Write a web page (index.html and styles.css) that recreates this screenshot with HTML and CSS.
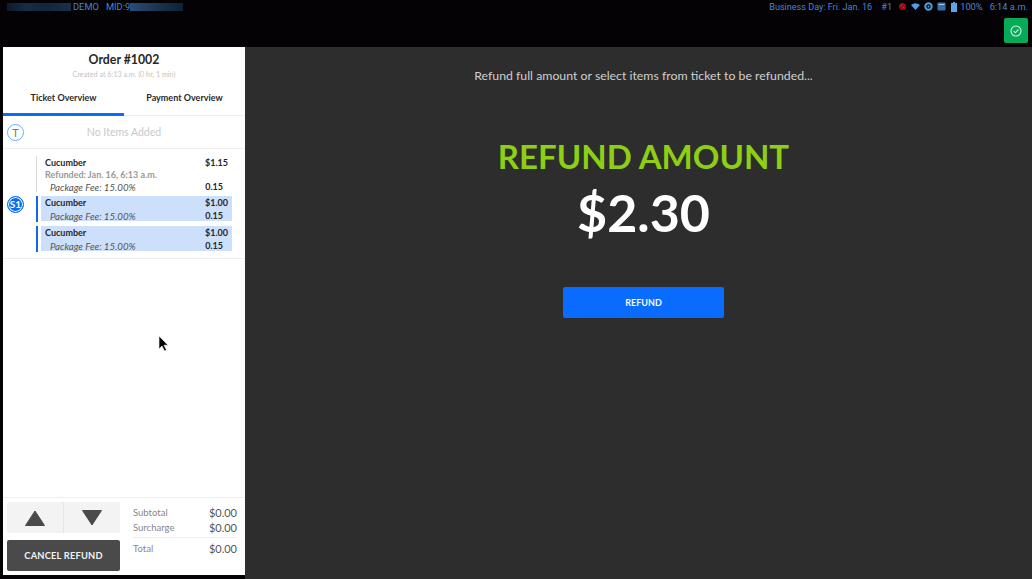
FILE: index.html
```html
<!DOCTYPE html>
<html lang="en">
<head>
<meta charset="utf-8">
<title>Refund</title>
<link rel="stylesheet" href="styles.css">
</head>
<body>
<div class="app">
  <header class="topbar">
    <div class="status">
      <div class="status-left">
        <span class="redact redact-a"></span>
        <span class="demo">DEMO</span>
        <span class="mid">MID:9</span>
        <span class="redact redact-b"></span>
      </div>
      <div class="status-right">
        <span class="biz">Business Day: Fri. Jan. 16</span>
        <span class="num">#1</span>
        <svg class="ico" width="9" height="9" viewBox="0 0 9 9"><path d="M3 1h3l2 2v3L6 8H3L1 6V3z" fill="#8f0c14"/><circle cx="3.500" cy="3.500" r="1" fill="#d01820"/><circle cx="5.500" cy="5.500" r="1" fill="#d01820"/></svg>
        <svg class="ico" width="9" height="7" viewBox="0 0 9 7"><path d="M0 2Q4.500-1.500 9 2L4.500 7z" fill="#4d9de8"/></svg>
        <svg class="ico" width="9" height="9" viewBox="0 0 9 9"><circle cx="4.500" cy="4.500" r="3.200" fill="none" stroke="#4d9de8" stroke-width="2"/><circle cx="4.500" cy="4.500" r="1" fill="#4d9de8"/></svg>
        <svg class="ico" width="9" height="9" viewBox="0 0 9 9"><rect x=".5" y=".5" width="8" height="8" rx="1" fill="#3a6ea8"/><rect x="1.500" y="2" width="6" height="1" fill="#a5c8ee"/></svg>
        <svg class="ico batt" width="6" height="10" viewBox="0 0 6 10"><path d="M2 0h2v1h2v9H0V1h2z" fill="#5aa6ee"/></svg>
        <span class="pct">100%</span>
        <span class="clock">6:14 a.m.</span>
      </div>
    </div>
    <div class="actions">
      <button class="ok-btn" aria-label="OK">
        <svg width="12" height="12" viewBox="0 0 12 12"><circle cx="6" cy="6" r="5" fill="none" stroke="#d8f3e2" stroke-width="1.100"/><path d="M3.600 6.200 5.300 7.800 8.400 4.500" fill="none" stroke="#d8f3e2" stroke-width="1.100"/></svg>
      </button>
    </div>
  </header>
  <div class="content">
    <aside class="sidebar">
      <div class="order-head">
        <h1 class="order-title">Order #1002</h1>
        <p class="order-sub">Created at 6:13 a.m. (0 hr, 1 min)</p>
      </div>
      <nav class="tabs">
        <div class="tab tab-active">Ticket Overview</div>
        <div class="tab">Payment Overview</div>
      </nav>
      <section class="seat-empty">
        <span class="badge badge-t">T</span>
        <span class="no-items">No Items Added</span>
      </section>
      <section class="seat">
        <span class="badge badge-s">S1</span>
        <div class="items">
          <div class="item item-refunded">
            <div class="row"><span class="name">Cucumber</span><span class="price">$1.15</span></div>
            <div class="refunded">Refunded: Jan. 16, 6:13 a.m.</div>
            <div class="row fee"><span>Package Fee: 15.00%</span><span class="fee-price">0.15</span></div>
          </div>
          <div class="item item-selected">
            <div class="item-body">
              <div class="row"><span class="name">Cucumber</span><span class="price">$1.00</span></div>
              <div class="row fee"><span>Package Fee: 15.00%</span><span class="fee-price">0.15</span></div>
            </div>
          </div>
          <div class="item item-selected">
            <div class="item-body">
              <div class="row"><span class="name">Cucumber</span><span class="price">$1.00</span></div>
              <div class="row fee"><span>Package Fee: 15.00%</span><span class="fee-price">0.15</span></div>
            </div>
          </div>
        </div>
      </section>
      <div class="spacer"></div>
      <footer class="side-foot">
        <div class="controls">
          <div class="arrows">
            <button class="arrow" aria-label="Up"><svg width="20" height="16" viewBox="0 0 20 16"><path d="M10 1 19.500 15.500H.5z" fill="#4a4a4a" stroke="#4a4a4a" stroke-linejoin="round"/></svg></button>
            <button class="arrow" aria-label="Down"><svg width="20" height="16" viewBox="0 0 20 16"><path d="M10 15 .5.500h19z" fill="#4a4a4a" stroke="#4a4a4a" stroke-linejoin="round"/></svg></button>
          </div>
          <button class="cancel">CANCEL REFUND</button>
        </div>
        <div class="totals">
          <div class="t-row"><span class="t-label">Subtotal</span><span class="t-val">$0.00</span></div>
          <div class="t-row"><span class="t-label">Surcharge</span><span class="t-val">$0.00</span></div>
          <div class="t-row t-total"><span class="t-label">Total</span><span class="t-val">$0.00</span></div>
        </div>
      </footer>
    </aside>
    <main class="main">
      <p class="hint">Refund full amount or select items from ticket to be refunded...</p>
      <h2 class="refund-title">REFUND AMOUNT</h2>
      <div class="refund-value">$2.30</div>
      <button class="refund-btn">REFUND</button>
    </main>
  </div>
</div>
<svg class="cursor" width="12" height="18" viewBox="0 0 12 18"><path d="M1 1v13l3-3 2.500 5 2-1-2.500-4.800H10z" fill="#000" stroke="#fff" stroke-width=".6"/></svg>
</body>
</html>
```
FILE: styles.css
```css
* { box-sizing: border-box; }
html, body { margin: 0; height: 100%; overflow: hidden; }
body { background: #040204; font-family: "Lato", "Open Sans", sans-serif; color: #222; }
p, h1, h2 { margin: 0; }
button { border: 0; padding: 0; font: inherit; cursor: pointer; }

.app { display: flex; flex-direction: column; height: 579px; width: 1032px; }

.topbar { height: 47px; flex: none; display: flex; flex-direction: column; background: #040204; }
.status { height: 13px; display: flex; justify-content: space-between; align-items: center; font-family: "Roboto", sans-serif; font-size: 9.300px; color: #4588d0; padding: 0 4px 0 7px; white-space: nowrap; }
.status-left, .status-right { display: flex; align-items: center; }
.redact { display: block; height: 8px; }
.redact-a { width: 64px; background: linear-gradient(90deg, #0c1a2a, #182c44 30%, #10263c 60%, #1a3048); margin-right: 2px; }
.redact-b { width: 53px; background: linear-gradient(90deg, #2a4e78, #1a3550 50%, #0f2234); }
.demo { margin-right: 7px; }
.biz { margin-right: 9px; font-size: 9.050px; }
.num { margin-right: 6px; }
.ico { margin-right: 4px; flex: none; }
.batt { margin: 0 3px 0 1px; }
.pct { margin-right: 7px; }
.actions { display: flex; justify-content: flex-end; padding: 5px 4px 0 0; }
.ok-btn { width: 24px; height: 25px; background: #06ab58; border-radius: 2px; display: flex; align-items: center; justify-content: center; }

.content { flex: 1; display: flex; min-height: 0; padding-left: 3px; background: #040204; }
.sidebar { width: 242px; margin-bottom: 4px; background: #fff; display: flex; flex-direction: column; }
.main { flex: 1; background: #2d2d2d; display: flex; flex-direction: column; align-items: center; padding-left: 10px; }

.order-head { height: 42px; text-align: center; padding-top: 5px; }
.order-title { font-size: 12.300px; font-weight: 700; line-height: 15px; color: #262626; }
.order-sub { font-size: 7.200px; line-height: 9px; margin-top: 3px; color: #c4c4c4; }

.tabs { display: flex; height: 27px; border-bottom: 1px solid #eee; }
.tab { width: 121px; font-size: 9px; font-weight: 700; color: #2a2a2a; text-align: center; padding-top: 3px; height: 27px; }
.tab-active { border-bottom: 3px solid #0a6cf0; }

.seat-empty { display: flex; align-items: center; height: 33px; border-bottom: 1px solid #eee; padding-left: 4px; }
.badge { width: 17px; height: 17px; border-radius: 50%; display: flex; align-items: center; justify-content: center; flex: none; font-size: 10px; }
.badge-t { border: 1px solid #6aaef5; color: #777; font-size: 11px; }
.no-items { flex: 1; text-align: center; color: #c8c8c8; font-size: 10.500px; padding-right: 21px; }

.seat { display: flex; align-items: center; padding: 7px 0 6px 4px; border-bottom: 1px solid #eee; }
.badge-s { background: #0a6cf0; border: 1px solid #0a6cf0; box-shadow: inset 0 0 0 1px #fff; color: #fff; font-weight: 700; }
.items { margin-left: 12px; width: 196px; display: flex; flex-direction: column; gap: 4px; }
.item { font-size: 9px; line-height: 12px; }
.item-refunded { border-left: 1px solid #d8d8d8; padding: 1px 4px 1px 8px; height: 36px; }
.item-selected { border-left: 2px solid #0a6cf0; padding-left: 3px; height: 26px; }
.item-body { background: #cce0fb; height: 25px; padding: 1px 4px 0 4px; }
.row { display: flex; justify-content: space-between; }
.item-selected .fee { margin-top: 1px; }
.name { font-weight: 700; color: #262626; }
.price { font-weight: 700; color: #262626; }
.refunded { color: #999; font-weight: 700; line-height: 12px; }
.fee { font-style: italic; color: #555; padding-left: 5px; font-size: 9.700px; }
.fee-price { font-style: normal; font-weight: 700; font-size: 9px; color: #262626; padding-right: 5px; }

.spacer { flex: 1; }
.side-foot { display: flex; border-top: 1px solid #eee; height: 78px; padding: 4px 8px 0 4px; }
.controls { width: 113px; display: flex; flex-direction: column; gap: 7px; }
.arrows { display: flex; height: 31px; background: #f3f3f3; border-radius: 2px; }
.arrow { flex: 1; background: transparent; display: flex; align-items: center; justify-content: center; }
.arrow + .arrow { border-left: 1px solid #e6e6e6; }
.cancel { height: 31px; background: #4a4a4a; border-radius: 2px; color: #f2f2f2; font-size: 9.300px; font-weight: 700; letter-spacing: .2px; }
.totals { flex: 1; margin-left: 13px; padding-top: 3px; }
.t-row { display: flex; justify-content: space-between; height: 15px; align-items: center; }
.t-label { color: #888; font-size: 9.500px; }
.t-val { color: #555; font-size: 11px; }
.t-total { border-top: 1px solid #eee; height: 21px; margin-top: 2px; }

.hint { margin-top: 21px; font-size: 12.300px; line-height: 16px; color: #cfcfcf; }
.refund-title { margin-top: 52px; font-size: 33px; line-height: 40px; font-weight: 700; color: #8ccf14; }
.refund-value { margin-top: 6px; font-size: 52px; line-height: 60px; font-weight: 700; color: #fff; }
.refund-btn { margin-top: 45px; width: 161px; height: 31px; background: #0a6cff; border-radius: 2px; color: #f4f8ff; font-size: 9px; font-weight: 700; }

.cursor { position: absolute; left: 158px; top: 335px; }
```
